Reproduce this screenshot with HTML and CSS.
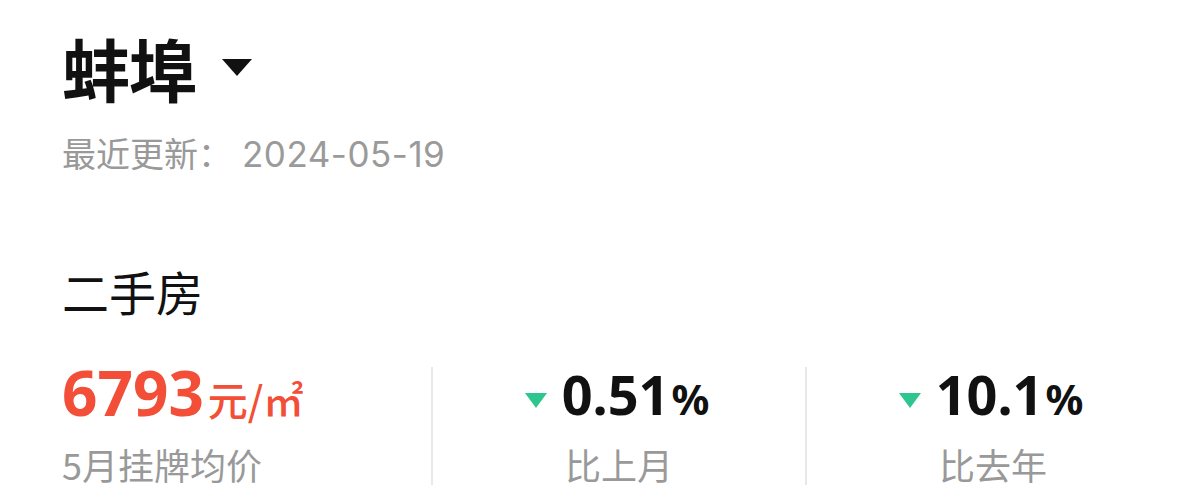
FILE: index.html
```html
<html>
<head>
  <meta charset="utf-8">
  <title>蚌埠 房价</title>
  <link rel="stylesheet" href="styles.css">
</head>
<body>
  <div id="page">
    <div class="city">
      <span class="city-name">蚌埠</span>
      <span class="city-arrow"></span>
    </div>
    <div class="updated">最近更新：<span class="date">2024-05-19</span></div>

    <div class="section-title">二手房</div>

    <div class="stats">
      <div class="stat first">
        <div class="value price">6793<span class="unit">元/㎡</span></div>
        <div class="label">5月挂牌均价</div>
      </div>
      <div class="stat">
        <div class="value change"><span class="down"></span>0.51<span class="pct">%</span></div>
        <div class="label">比上月</div>
      </div>
      <div class="stat">
        <div class="value change"><span class="down"></span>10.1<span class="pct">%</span></div>
        <div class="label">比去年</div>
      </div>
    </div>
  </div>
</body>
</html>
```

FILE: styles.css
```css
body {
  margin: 0;
  background-color: #FFFFFF;
  font-family: "Noto Sans CJK SC", "Noto Sans", sans-serif;
  color: #111111;
}
#page {
  padding: 34px 0 0 62px;
}
.city {
  display: flex;
  align-items: center;
  height: 68px;
}
.city-name {
  font-size: 68px;
  line-height: 68px;
  font-weight: bold;
  letter-spacing: -1px;
}
.city-arrow {
  width: 0;
  height: 0;
  margin-left: 26px;
  margin-top: -2px;
  border-left: 15px solid transparent;
  border-right: 15px solid transparent;
  border-top: 17px solid #111111;
}
.updated {
  margin-top: 34px;
  font-size: 34px;
  line-height: 34px;
  color: #999999;
}
.date {
  margin-left: 10px;
  font-family: "Inter", "Noto Sans", sans-serif;
  font-size: 35px;
  letter-spacing: 0.5px;
  color: #9A9A9A;
}
.section-title {
  margin-top: 96px;
  font-size: 47px;
  line-height: 48px;
}
.stats {
  display: grid;
  grid-template-columns: 369px 374px 1fr;
  margin-top: 52px;
}
.stat {
  display: flex;
  flex-direction: column;
  align-items: center;
  border-left: 2px solid #E8E8EC;
  height: 118px;
}
.stat.first {
  align-items: flex-start;
  border-left: none;
}
.value {
  display: flex;
  align-items: baseline;
  font-family: "Noto Sans", sans-serif;
  font-size: 62px;
  line-height: 50px;
  font-weight: bold;
}
.value.change {
  margin-top: 2px;
  margin-right: 4px;
  font-size: 54px;
}
.price {
  color: #F24E38;
}
.unit {
  margin-left: 4px;
  font-family: "Noto Sans CJK SC", sans-serif;
  font-size: 40px;
  font-weight: 500;
}
.pct {
  margin-left: 2px;
  font-size: 42px;
}
.down {
  align-self: center;
  width: 0;
  height: 0;
  margin-top: 8px;
  margin-right: 15px;
  border-left: 11px solid transparent;
  border-right: 11px solid transparent;
  border-top: 15px solid #2DC68E;
}
.label {
  margin-top: 20px;
  font-size: 36px;
  line-height: 40px;
  color: #999999;
}
```
